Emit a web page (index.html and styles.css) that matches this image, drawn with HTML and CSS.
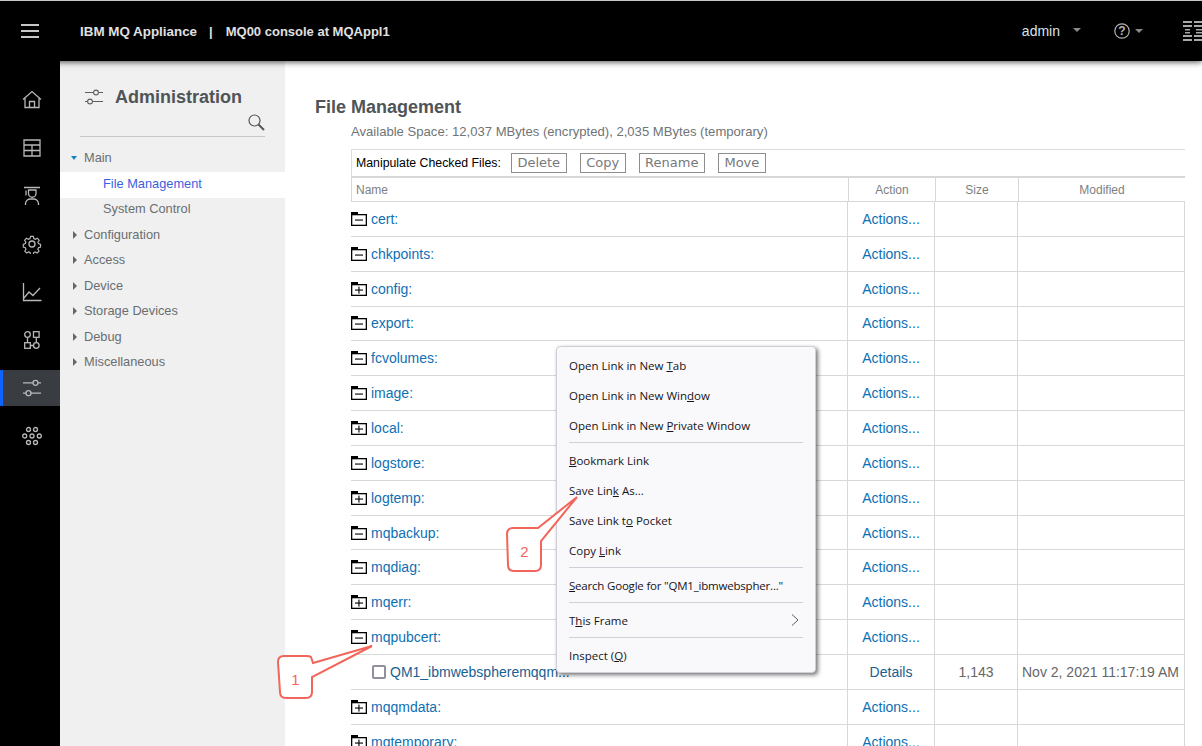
FILE: index.html
```html
<!DOCTYPE html>
<html lang="en">
<head>
    <meta charset="UTF-8">
    <title>File Management</title>
    <link rel="stylesheet" href="styles.css">
</head>
<body>
    <svg width="0" height="0" class="defs">
        <symbol id="folder-open" viewBox="0 0 16 14">
            <path d="M0 0h7v2h9v12H0z" fill="#000"/>
            <rect x="1.3" y="3.3" width="13.4" height="9.4" fill="#fff"/>
            <rect x="4" y="7.5" width="8" height="1.1" fill="#000"/>
        </symbol>
        <symbol id="folder-closed" viewBox="0 0 16 14">
            <path d="M0 0h7v2h9v12H0z" fill="#000"/>
            <rect x="1.3" y="3.3" width="13.4" height="9.4" fill="#fff"/>
            <rect x="4" y="7.5" width="8" height="1.1" fill="#000"/>
            <rect x="7.4" y="4.6" width="1.1" height="7" fill="#000"/>
        </symbol>
    </svg>

    <header class="topbar">
        <button class="menu-btn"><span></span><span></span><span></span></button>
        <div class="product"><span class="product-name">IBM MQ Appliance</span><span class="sep">|</span><span>MQ00 console at MQAppl1</span></div>
        <div class="user">admin</div>
        <span class="caret user-caret"></span>
        <svg class="help" width="16" height="16" viewBox="0 0 16 16">
            <circle cx="8" cy="8" r="7.2" fill="none" stroke="#b4b4b4" stroke-width="1.2"/>
            <text x="8" y="12.300" text-anchor="middle" class="help-mark">?</text>
        </svg>
        <span class="caret help-caret"></span>
        <svg class="ibm" width="19" height="20" viewBox="0 0 19 20">
            <path d="M0 0h9v2H0zM0 4h9v2H0zM2 8h5v1.500H2zM2 11h5v1.500H2zM0 14h9v2H0zM0 18h9v2H0z" fill="#a8a8a8"/>
            <path d="M11 0h8v2h-8zM11 4h8v2h-8zM13 8h6v1.500h-6zM13 11h6v1.500h-6zM11 14h8v2h-8zM11 18h8v2h-8z" fill="#a8a8a8"/>
        </svg>
    </header>

    <div class="layout">
        <nav class="rail">
            <a class="rail-item">
                <svg viewBox="0 0 20 20"><path d="M1 9.500 10 1.500l9 8M3 8v9.500h14V8M7.500 17.500V11.500h5v6"/></svg>
            </a>
            <a class="rail-item">
                <svg viewBox="0 0 20 20"><path d="M2 2h16v16H2zM2 7h16M2 12.500h16M10 7v11"/></svg>
            </a>
            <a class="rail-item">
                <svg viewBox="0 0 20 20"><path d="M2 1.500h16M4 4.500v5M6.500 4h7.500v3.500a3.700 3.700 0 0 1-7.500 0zM3.500 19v-1.500a5 5 0 0 1 5-4.500h3a5 5 0 0 1 5 4.500V19"/></svg>
            </a>
            <a class="rail-item">
                <svg viewBox="0 0 20 20"><circle cx="10" cy="10" r="3"/><path d="M8.500 1.500h3l.5 2.500 1.700.8 2.300-1.200 2 2.200-1.400 2.100.6 1.700 2.300.9v3l-2.300.6-.7 1.800 1.300 2.100-2.100 2.100-2.100-1.300-1.700.7-.5 2.400h-3l-.5-2.400-1.800-.7-2 1.300-2.100-2.100 1.300-2.100-.7-1.800-2.300-.6v-3l2.300-.9.6-1.700-1.400-2.100 2-2.200 2.300 1.200 1.700-.8z" transform="translate(1 1) scale(.9)"/></svg>
            </a>
            <a class="rail-item">
                <svg viewBox="0 0 20 20"><path d="M1.500 1v17.500h18M2 16l5-6 4 3.500L18 6"/></svg>
            </a>
            <a class="rail-item">
                <svg viewBox="0 0 20 20"><circle cx="5.500" cy="4.500" r="2.800"/><rect x="11.500" y="1.700" width="5.600" height="5.600"/><rect x="2.700" y="12.700" width="5.600" height="5.600"/><circle cx="14.300" cy="15.500" r="2.800"/><path d="M5.500 7.300v5.400M14.300 7.300v5.400M8.300 15.500h3.200"/></svg>
            </a>
            <a class="rail-item active">
                <svg viewBox="0 0 20 20"><path d="M1 4.800h10M16 4.800h3M1 15.200h3M9 15.200h10"/><circle cx="13.500" cy="4.800" r="2.500"/><circle cx="6.500" cy="15.200" r="2.500"/></svg>
            </a>
            <a class="rail-item">
                <svg viewBox="0 0 20 20"><circle cx="6.500" cy="3.500" r="2"/><circle cx="13.500" cy="3.500" r="2"/><circle cx="2.700" cy="10" r="2"/><circle cx="10" cy="10" r="2"/><circle cx="17.300" cy="10" r="2"/><circle cx="6.500" cy="16.500" r="2"/><circle cx="13.500" cy="16.500" r="2"/></svg>
            </a>
        </nav>

        <aside class="sidebar">
            <div class="side-title">
                <svg width="18" height="16" viewBox="0 0 18 16" class="side-icon"><path d="M0 3.500h8.500M13.500 3.500H18M0 12.500h2.500M7.500 12.500H18"/><circle cx="11" cy="3.500" r="2.400"/><circle cx="5" cy="12.500" r="2.400"/></svg>
                <h2>Administration</h2>
            </div>
            <div class="side-search">
                <svg width="17" height="17" viewBox="0 0 17 17"><circle cx="6.500" cy="6.500" r="5.500" fill="none" stroke="#555" stroke-width="1.200"/><path d="M10.500 10.500 16 16" stroke="#555" stroke-width="2"/></svg>
            </div>
            <ul class="tree">
                <li class="open">Main</li>
                <li class="sub current">File Management</li>
                <li class="sub after-current">System Control</li>
                <li class="closed">Configuration</li>
                <li class="closed">Access</li>
                <li class="closed">Device</li>
                <li class="closed">Storage Devices</li>
                <li class="closed">Debug</li>
                <li class="closed">Miscellaneous</li>
            </ul>
        </aside>

        <main class="content">
            <h1>File Management</h1>
            <p class="space">Available Space: 12,037 MBytes (encrypted), 2,035 MBytes (temporary)</p>

            <div class="files">
                <div class="toolbar">
                    <span class="toolbar-label">Manipulate Checked Files:</span>
                    <button>Delete</button>
                    <button>Copy</button>
                    <button>Rename</button>
                    <button>Move</button>
                </div>
                <div class="row head">
                    <div class="name">Name</div>
                    <div>Action</div>
                    <div>Size</div>
                    <div>Modified</div>
                </div>

                <div class="row"><div class="name"><svg class="folder"><use href="#folder-open"/></svg><a>cert:</a></div><div><a>Actions...</a></div><div></div><div></div></div>
                <div class="row"><div class="name"><svg class="folder"><use href="#folder-open"/></svg><a>chkpoints:</a></div><div><a>Actions...</a></div><div></div><div></div></div>
                <div class="row"><div class="name"><svg class="folder"><use href="#folder-closed"/></svg><a>config:</a></div><div><a>Actions...</a></div><div></div><div></div></div>
                <div class="row"><div class="name"><svg class="folder"><use href="#folder-open"/></svg><a>export:</a></div><div><a>Actions...</a></div><div></div><div></div></div>
                <div class="row"><div class="name"><svg class="folder"><use href="#folder-open"/></svg><a>fcvolumes:</a></div><div><a>Actions...</a></div><div></div><div></div></div>
                <div class="row"><div class="name"><svg class="folder"><use href="#folder-open"/></svg><a>image:</a></div><div><a>Actions...</a></div><div></div><div></div></div>
                <div class="row"><div class="name"><svg class="folder"><use href="#folder-closed"/></svg><a>local:</a></div><div><a>Actions...</a></div><div></div><div></div></div>
                <div class="row"><div class="name"><svg class="folder"><use href="#folder-open"/></svg><a>logstore:</a></div><div><a>Actions...</a></div><div></div><div></div></div>
                <div class="row"><div class="name"><svg class="folder"><use href="#folder-closed"/></svg><a>logtemp:</a></div><div><a>Actions...</a></div><div></div><div></div></div>
                <div class="row"><div class="name"><svg class="folder"><use href="#folder-open"/></svg><a>mqbackup:</a></div><div><a>Actions...</a></div><div></div><div></div></div>
                <div class="row"><div class="name"><svg class="folder"><use href="#folder-open"/></svg><a>mqdiag:</a></div><div><a>Actions...</a></div><div></div><div></div></div>
                <div class="row"><div class="name"><svg class="folder"><use href="#folder-closed"/></svg><a>mqerr:</a></div><div><a>Actions...</a></div><div></div><div></div></div>
                <div class="row"><div class="name"><svg class="folder"><use href="#folder-open"/></svg><a>mqpubcert:</a></div><div><a>Actions...</a></div><div></div><div></div></div>
                <div class="row file"><div class="name"><span class="check"></span><a class="file-link">QM1_ibmwebspheremqqm...</a></div><div><a class="file-link">Details</a></div><div class="size">1,143</div><div class="date">Nov 2, 2021 11:17:19 AM</div></div>
                <div class="row"><div class="name"><svg class="folder"><use href="#folder-closed"/></svg><a>mqqmdata:</a></div><div><a>Actions...</a></div><div></div><div></div></div>
                <div class="row"><div class="name"><svg class="folder"><use href="#folder-closed"/></svg><a>mqtemporary:</a></div><div><a>Actions...</a></div><div></div><div></div></div>
            </div>
        </main>
    </div>

    <div class="context-menu">
        <div class="item"><span>Open Link in New <u>T</u>ab</span></div>
        <div class="item"><span>Open Link in New Win<u>d</u>ow</span></div>
        <div class="item"><span>Open Link in New <u>P</u>rivate Window</span></div>
        <hr>
        <div class="item"><span><u>B</u>ookmark Link</span></div>
        <div class="item"><span>Save Lin<u>k</u> As...</span></div>
        <div class="item"><span>Save Link t<u>o</u> Pocket</span></div>
        <div class="item"><span>Copy <u>L</u>ink</span></div>
        <hr>
        <div class="item tight"><span><u>S</u>earch Google for "QM1_ibmwebspher..."</span></div>
        <hr>
        <div class="item"><span>T<u>h</u>is Frame</span>
            <svg width="8" height="12" viewBox="0 0 8 12" class="chevron"><path d="M1 .5 7 6l-6 5.500" fill="none" stroke="#5b5b66" stroke-width="1"/></svg>
        </div>
        <hr>
        <div class="item"><span>Inspect (<u>Q</u>)</span></div>
    </div>

    <svg class="callouts" width="1202" height="746" viewBox="0 0 1202 746">
        <path d="M372 646 313 663 311 657Q310 656 306 656H284Q278 656 278 662L280 692Q280 698 286 698H306Q312 698 312 692V677Z"/>
        <text x="295.500" y="685">1</text>
        <path d="M577 497 538 528H513Q507 528 507 534L508 565Q508 571 514 571H535Q541 571 541 565V541Z"/>
        <text x="524.500" y="557">2</text>
    </svg>
</body>
</html>
```

FILE: styles.css
```css
* {
    box-sizing: border-box;
}

html, body {
    height: 100%;
}

body {
    margin: 0;
    overflow: hidden;
    background-color: white;
    font-family: "Liberation Sans", Arial, sans-serif;
    border-top: 1px solid #c8c8c8;
}

.defs {
    position: absolute;
}

/* top bar */

.topbar {
    position: relative;
    z-index: 2;
    display: flex;
    align-items: center;
    height: 60px;
    background-color: black;
    box-shadow: 0 1px 6px rgba(0, 0, 0, 0.7);
    color: #e0e0e0;
    overflow-x: clip;
}

.menu-btn {
    display: flex;
    flex-direction: column;
    gap: 4px;
    width: 18px;
    margin-left: 21px;
    padding: 0;
    border: none;
    background: none;
}

.menu-btn span {
    display: block;
    height: 2px;
    width: 18px;
    background-color: #c6c6c6;
}

.product {
    margin-left: 41px;
    font-size: 13px;
    font-weight: bold;
    white-space: nowrap;
}

.product-name {
    font-size: 13.4px;
}

.sep {
    margin: 0 13px 0 12px;
}

.user {
    margin-left: auto;
    font-size: 14px;
    color: #d8e4f0;
}

.caret {
    width: 0;
    height: 0;
    border-left: 4px solid transparent;
    border-right: 4px solid transparent;
    border-top: 4px solid #8a8a8a;
}

.user-caret {
    margin-left: 13px;
    margin-top: -3px;
}

.help {
    margin-left: 33px;
}

.help-mark {
    font-size: 12px;
    font-weight: bold;
    fill: #b4b4b4;
}

.help-caret {
    margin-left: 5px;
}

.ibm {
    margin-left: 40px;
    flex-shrink: 0;
}

/* left side */

.layout {
    display: flex;
    height: 685px;
}

.rail {
    display: flex;
    flex-direction: column;
    gap: 12px;
    width: 60px;
    padding-top: 21px;
    background-color: black;
}

.rail-item {
    display: flex;
    align-items: center;
    justify-content: center;
    height: 36px;
    padding-left: 1px;
    border-left: 3px solid transparent;
}

.rail-item svg {
    width: 20px;
    height: 20px;
    fill: none;
    stroke: #b8b8b8;
    stroke-width: 1.3;
}

.rail-item.active {
    background-color: #393c40;
    border-left-color: #0f62fe;
}

.sidebar {
    width: 225px;
    background-color: #f0f0f0;
    color: #6a6e70;
    font-size: 12.8px;
}

.side-title {
    display: flex;
    align-items: center;
    height: 24px;
    margin: 24px 0 0 25px;
}

.side-icon {
    fill: none;
    stroke: #5a5f62;
    stroke-width: 1.1;
}

.side-title h2 {
    margin: 0 0 0 12px;
    font-size: 18px;
    color: #4f5457;
}

.side-search {
    display: flex;
    justify-content: flex-end;
    height: 23px;
    margin: 5px 20px 0 20px;
    border-bottom: 1px solid #c8c8c8;
}

.tree {
    list-style: none;
    margin: 8px 0 0 0;
    padding: 0;
}

.tree li {
    position: relative;
    height: 25.5px;
    line-height: 25.5px;
    padding-left: 24px;
}

.tree li.open {
    height: 27px;
}

.tree li.sub {
    padding-left: 43px;
}

.tree li.current {
    height: 26px;
    line-height: 23px;
    background-color: white;
    color: #3c5fe0;
}

.tree li.after-current {
    height: 23.5px;
    line-height: 21px;
}

.tree li.closed::before {
    content: "";
    position: absolute;
    left: 13px;
    top: 9px;
    border-top: 4px solid transparent;
    border-bottom: 4px solid transparent;
    border-left: 4.5px solid #666;
}

.tree li.open::before {
    content: "";
    position: absolute;
    left: 11px;
    top: 11px;
    border-left: 3.5px solid transparent;
    border-right: 3.5px solid transparent;
    border-top: 4px solid #0f86c0;
}

/* file table */

.content {
    flex: 1;
    padding: 35px 17px 0 30px;
    overflow: hidden;
}

h1 {
    margin: 0;
    font-size: 18px;
    line-height: 22px;
    color: #4f5457;
}

.space {
    margin: 5px 0 0 36px;
    font-size: 13.1px;
    line-height: 18px;
    color: #6f7476;
}

.files {
    margin: 8px 0 0 36px;
}

.toolbar {
    display: flex;
    align-items: center;
    height: 29px;
    padding-left: 4px;
    padding-bottom: 1px;
    border-top: 1px solid #dcdcdc;
    border-left: 1px solid #dcdcdc;
    border-bottom: 2px solid #d8d8d8;
}

.toolbar-label {
    font-size: 12.3px;
    color: black;
    margin-right: 10px;
}

.toolbar button {
    height: 20px;
    margin-right: 13px;
    padding: 0 5.5px;
    border: 1px solid #8d8d8d;
    background-color: white;
    font-family: "DejaVu Sans", Verdana, sans-serif;
    font-size: 13px;
    color: #77797b;
}

.row {
    display: grid;
    grid-template-columns: 497px 87px 83px 167px;
    height: 34.85px;
    border-bottom: 1px solid #d8d8d8;
    font-size: 14px;
    color: #666;
}

.row > div {
    display: flex;
    align-items: center;
    justify-content: center;
    border-right: 1px solid #d8d8d8;
}

.row > .name {
    justify-content: flex-start;
    border-right: 1px solid #d8d8d8;
}

.row a {
    color: #0f6fb3;
}

.row.head {
    grid-template-columns: 497px 87px 83px 166px;
    height: 24px;
    border-left: 1px solid #d8d8d8;
    font-size: 12px;
    color: #7c7f82;
}

.row.head > div:last-child {
    border-right: none;
}

.row.head .name {
    padding-left: 4px;
}

.folder {
    width: 16px;
    height: 14px;
    margin-right: 4px;
    flex-shrink: 0;
}

.check {
    width: 14px;
    height: 14px;
    margin: 0 4px 0 21px;
    border: 2px solid #8f8f9d;
    border-radius: 2px;
}

.row a.file-link {
    color: #1a6090;
    white-space: nowrap;
}

.row .date {
    justify-content: flex-start;
    padding-left: 4px;
    white-space: nowrap;
}

/* firefox context menu, sits over the table */

.context-menu {
    position: absolute;
    left: 556px;
    top: 346px;
    width: 260px;
    padding: 3px 12px 2px 12px;
    background-color: #f9f9fb;
    border: 1px solid #cfcfd8;
    border-radius: 4px;
    box-shadow: 2px 2px 4px rgba(0, 0, 0, 0.55);
    font-family: "Open Sans", sans-serif;
    font-size: 11.5px;
    color: #15141a;
}

.item {
    display: flex;
    align-items: center;
    height: 30px;
    white-space: pre;
}

.item.tight {
    letter-spacing: -0.2px;
}

.chevron {
    margin-left: auto;
    margin-right: 4px;
}

.context-menu hr {
    margin: 2px 0 2px 0;
    border: none;
    border-top: 1px solid #cfcfd8;
}

.callouts {
    position: absolute;
    left: 0;
    top: 0;
    pointer-events: none;
}

.callouts path {
    fill: white;
    stroke: #f2655a;
    stroke-width: 2;
}

.callouts text {
    font-size: 15px;
    fill: #f2655a;
    text-anchor: middle;
}
```
